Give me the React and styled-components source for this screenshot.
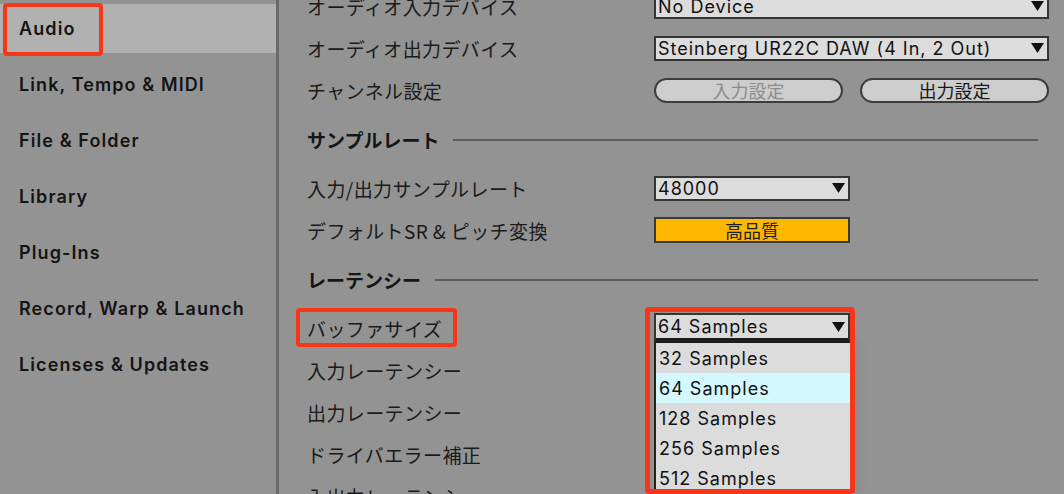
import React from 'react';
import styled, { createGlobalStyle } from 'styled-components';

const GlobalStyle = createGlobalStyle`
  html, body {
    margin: 0;
    padding: 0;
    width: 1064px;
    height: 494px;
    overflow: hidden;
    background: #939393;
  }
  body {
    font-family: Inter, "Noto Sans CJK JP", sans-serif;
    color: #161616;
  }
`;

const Window = styled.div`
  display: flex;
  width: 1064px;
  height: 494px;
  overflow: hidden;
  background: #939393;
`;

const Sidebar = styled.div`
  width: 276px;
  flex-shrink: 0;
  border-right: 3px solid #6b6b6b;
  padding-top: 4px;
  display: flex;
  flex-direction: column;
  gap: 7px;
`;

const NavItem = styled.div`
  position: relative;
  height: 49px;
  display: flex;
  align-items: center;
  padding-left: 19px;
  font-family: Inter, sans-serif;
  font-weight: 600;
  font-size: 18px;
  letter-spacing: 1.1px;
  color: #141414;
  background: ${(p) => (p.$active ? '#b1b1b1' : 'transparent')};
`;

const Callout = styled.div`
  position: absolute;
  left: ${(p) => p.$x}px;
  top: ${(p) => p.$y}px;
  width: ${(p) => p.$w}px;
  height: ${(p) => p.$h}px;
  border: ${(p) => p.$t || 4}px solid #f73519;
  border-radius: 4px;
  box-sizing: border-box;
  pointer-events: none;
  z-index: 5;
`;

const Main = styled.div`
  flex: 1;
  overflow: hidden;
  padding-left: 28px;
`;

const Content = styled.div`
  margin-top: -15px;
  width: 731px;
`;

const Row = styled.div`
  position: relative;
  height: 42px;
  display: grid;
  grid-template-columns: 347px 1fr;
  align-items: center;
`;

const Label = styled.div`
  font-family: "Noto Sans CJK JP", sans-serif;
  font-size: 19px;
  letter-spacing: 0.4px;
  color: #1a1a1a;
  white-space: nowrap;
`;

const Section = styled.div`
  height: 56px;
  display: flex;
  align-items: center;
  gap: 14px;
`;

const SectionTitle = styled.div`
  font-family: "Noto Sans CJK JP", sans-serif;
  font-weight: 700;
  font-size: 19px;
  color: #161616;
  white-space: nowrap;
`;

const Rule = styled.div`
  flex: 1;
  height: 2px;
  background: #5b5b5b;
  margin-top: 2px;
`;

const Select = styled.div`
  position: relative;
  width: ${(p) => p.$w}px;
  height: ${(p) => (p.$open ? 30 : 25)}px;
  box-sizing: border-box;
  border: 2px solid #353535;
  border-bottom: ${(p) => (p.$open ? '5px solid #1e1e1e' : '2px solid #353535')};
  background: #dcdcdc;
  display: flex;
  align-items: center;
  justify-content: space-between;
  padding: 0 3px 0 2px;
  font-family: Inter, sans-serif;
  font-size: 18px;
  letter-spacing: 1px;
  color: #111;
  white-space: nowrap;
`;

const Arrow = () => (
  <svg width="13" height="10" viewBox="0 0 13 10">
    <polygon points="0,0 13,0 6.5,10" fill="#111" />
  </svg>
);

const Menu = styled.div`
  position: absolute;
  left: -2px;
  top: calc(100% + 5px);
  width: 196px;
  border-left: 2px solid #222;
  background: #dcdcdc;
  box-shadow: 8px 0 10px rgba(0, 0, 0, 0.06);
  z-index: 2;
`;

const MenuItem = styled.div`
  height: 30px;
  display: flex;
  align-items: center;
  padding-left: 3px;
  font-family: Inter, sans-serif;
  font-size: 18px;
  letter-spacing: 1px;
  color: #111;
  background: ${(p) => (p.$hover ? '#d3f8fd' : '#dcdcdc')};
`;

const Quality = styled.div`
  width: 196px;
  height: 26px;
  box-sizing: border-box;
  border: 2px solid #3a3a3a;
  background: #fdb802;
  display: flex;
  align-items: center;
  justify-content: center;
  font-family: "Noto Sans CJK JP", sans-serif;
  font-size: 18px;
  color: #1d1d1d;
`;

const ButtonGroup = styled.div`
  display: flex;
  gap: 17px;
`;

const PillButton = styled.div`
  width: 189px;
  height: 25px;
  box-sizing: border-box;
  border: 2px solid #3c3c3c;
  border-radius: 13px;
  background: #cdcdcd;
  display: flex;
  align-items: center;
  justify-content: center;
  font-family: "Noto Sans CJK JP", sans-serif;
  font-size: 18px;
  color: ${(p) => (p.$disabled ? '#8c8c8c' : '#161616')};
`;

const navItems = [
  'Audio',
  'Link, Tempo & MIDI',
  'File & Folder',
  'Library',
  'Plug-Ins',
  'Record, Warp & Launch',
  'Licenses & Updates',
];

const bufferSizes = ['32 Samples', '64 Samples', '128 Samples', '256 Samples', '512 Samples'];

export default function App() {
  return (
    <>
      <GlobalStyle />
      <Window>
        <Sidebar>
          {navItems.map((item, i) => (
            <NavItem key={item} $active={i === 0}>
              {item}
              {i === 0 && <Callout $x={3} $y={-1} $w={100} $h={53} />}
            </NavItem>
          ))}
        </Sidebar>
        <Main>
          <Content>
            <Row>
              <Label>オーディオ入力デバイス</Label>
              <Select $w={395}>No Device<Arrow /></Select>
            </Row>
            <Row>
              <Label>オーディオ出力デバイス</Label>
              <Select $w={395}>Steinberg UR22C DAW (4 In, 2 Out)<Arrow /></Select>
            </Row>
            <Row>
              <Label>チャンネル設定</Label>
              <ButtonGroup>
                <PillButton $disabled>入力設定</PillButton>
                <PillButton>出力設定</PillButton>
              </ButtonGroup>
            </Row>
            <Section>
              <SectionTitle>サンプルレート</SectionTitle>
              <Rule />
            </Section>
            <Row>
              <Label>入力/出力サンプルレート</Label>
              <Select $w={196}>48000<Arrow /></Select>
            </Row>
            <Row>
              <Label>デフォルトSR &amp; ピッチ変換</Label>
              <Quality>高品質</Quality>
            </Row>
            <Section>
              <SectionTitle>レーテンシー</SectionTitle>
              <Rule />
            </Section>
            <Row>
              <Label>バッファサイズ</Label>
              <Select $w={196} $open>
                64 Samples<Arrow />
                <Menu>
                  {bufferSizes.map((s) => (
                    <MenuItem key={s} $hover={s === '64 Samples'}>{s}</MenuItem>
                  ))}
                </Menu>
              </Select>
              <Callout $x={-11} $y={1} $w={161} $h={39} />
              <Callout $x={338} $y={0} $w={210} $h={187} $t={5} />
            </Row>
            <Row>
              <Label>入力レーテンシー</Label>
            </Row>
            <Row>
              <Label>出力レーテンシー</Label>
            </Row>
            <Row>
              <Label>ドライバエラー補正</Label>
            </Row>
            <Row>
              <Label>入出力レーテンシー</Label>
            </Row>
          </Content>
        </Main>
      </Window>
    </>
  );
}
